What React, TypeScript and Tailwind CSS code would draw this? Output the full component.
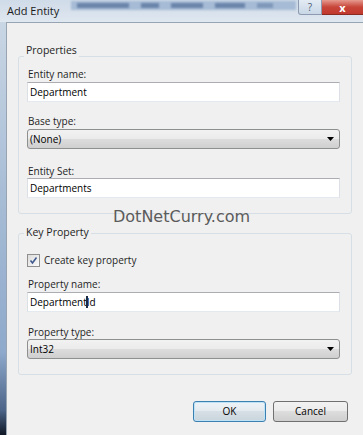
import React from "react";

const ui = { fontFamily: '"Open Sans", "Noto Sans", sans-serif' };

function Label({ children }: { children: React.ReactNode }) {
  return <div className="pl-[1px] text-[10px] leading-[14px] text-[#1e1e1e]">{children}</div>;
}

function TextBox({ children }: { children: React.ReactNode }) {
  return (
    <div className="flex h-[20px] items-center border border-[#abadb3] border-x-[#dbdfe6] border-b-[#e3e9ef] bg-white pl-[2px] text-[10px] text-black">
      {children}
    </div>
  );
}

function Combo({ value }: { value: string }) {
  return (
    <div className="flex h-[20px] items-center justify-between rounded-[3px] border border-[#8e8f8f] bg-[linear-gradient(#f2f2f2,#ebebeb_50%,#dddddd_50%,#cfcfcf)] pl-[2px] pr-[5px] text-[10px] text-black">
      <span>{value}</span>
      <svg width="7" height="4" viewBox="0 0 7 4">
        <path d="M0 0h7L3.5 4z" fill="#000" />
      </svg>
    </div>
  );
}

function Group({ title, legendPad, children }: { title: string; legendPad: string; children: React.ReactNode }) {
  return (
    <fieldset className="rounded-[3px] border border-[#d5dfe5] pb-[15px] pl-[8px] pr-[11px]">
      <legend className={`-ml-[3px] px-[2px] text-[10.5px] leading-[14px] text-[#1e1e1e] ${legendPad}`}>{title}</legend>
      {children}
    </fieldset>
  );
}

export default function App() {
  return (
    <div className="relative flex h-[435px] w-[363px] flex-col overflow-hidden bg-[#dce5ef]" style={ui}>
      {/* Title bar */}
      <div className="flex h-[22px] shrink-0 items-start bg-[linear-gradient(#cfdbe8,#dfe7f0)]">
        <div className="shrink-0 whitespace-nowrap pl-[7px] pt-[3px] text-[11px] leading-[16px] text-[#1a1a1a]">Add Entity</div>
        <div className="ml-[12px] mt-[1px] flex h-[9px] w-[225px] shrink-0 items-center gap-[12px] bg-[#a6bbd5] px-[6px] blur-[1px]">
          <span className="h-[5px] w-[52px] bg-[#6a85ab]" />
          <span className="h-[5px] w-[18px] bg-[#6a85ab]" />
          <span className="h-[5px] w-[32px] bg-[#6a85ab]" />
          <span className="h-[5px] w-[30px] bg-[#6a85ab]" />
          <span className="h-[5px] w-[16px] bg-[#7f98ba]" />
        </div>
        <div className="ml-auto flex">
          <div className="flex h-[15px] w-[24px] items-center justify-center rounded-bl-[3px] border border-t-0 border-[#8c9bb0] bg-[linear-gradient(#e3ebf4,#c8d6e6)] text-[10px] leading-none text-[#4a5a70]">
            ?
          </div>
          <div className="flex h-[15px] w-[41px] items-center justify-center border-b border-[#8b2a22] bg-[linear-gradient(#e69a8e,#c8453a_50%,#c0392e)] text-[11px] font-bold leading-none text-white">
            x
          </div>
        </div>
      </div>

      {/* Body */}
      <div className="flex flex-1">
        <div className="w-[6px] shrink-0 bg-[linear-gradient(#c9d6e4,#a9bed6_40%,#8ea9cb_80%,#4b6488_94%,#0f1725)]" />
        <div className="flex-1 border-l border-t border-[#98a4b2] bg-[#f0f0f0] pl-[11px] pr-[11px] pt-[20px]">
          <Group title="Properties" legendPad="pb-[12px]">
            <div className="-mt-[2px]">
              <Label>Entity name:</Label>
            </div>
            <div className="mt-[1px]">
              <TextBox>Department</TextBox>
            </div>
            <div className="mt-[12px]">
              <Label>Base type:</Label>
            </div>
            <div className="mt-[1px]">
              <Combo value="(None)" />
            </div>
            <div className="mt-[15px]">
              <Label>Entity Set:</Label>
            </div>
            <TextBox>Departments</TextBox>
          </Group>

          <div className="mt-[11px]">
            <Group title="Key Property" legendPad="pb-[2px]">
              <div className="mt-[12px] flex items-center gap-[4px]">
                <div className="flex h-[13px] w-[13px] items-center justify-center border border-[#8f8f8f] bg-[linear-gradient(135deg,#dcdcdc,#fbfbfb)]">
                  <svg width="9" height="9" viewBox="0 0 9 9">
                    <path d="M1.5 4.5 3.5 7 7.5 1.5" stroke="#3f5a8f" strokeWidth="1.6" fill="none" />
                  </svg>
                </div>
                <span className="text-[10px] leading-[14px] text-[#1e1e1e]">Create key property</span>
              </div>
              <div className="mt-[10px]">
                <Label>Property name:</Label>
              </div>
              <div className="mt-[1px]">
                <TextBox>
                  Department
                  <span className="relative">
                    <span className="absolute -left-[1px] top-[1px] h-[12px] w-[2px] bg-[#1c2a44]" />
                    Id
                  </span>
                </TextBox>
              </div>
              <div className="mt-[13px]">
                <Label>Property type:</Label>
              </div>
              <Combo value="Int32" />
            </Group>
          </div>

          <div className="mt-[26px] flex justify-end gap-[7px] pr-[4px]">
            <button className="flex h-[21px] w-[73px] items-center justify-center rounded-[3px] border border-[#3c7fb1] bg-[linear-gradient(#eef3f6,#e3eaef_50%,#d6dfe5_50%,#c9d4dc)] text-[10px] text-black shadow-[inset_0_0_0_1px_#bfe3f6]">
              OK
            </button>
            <button className="flex h-[21px] w-[75px] items-center justify-center rounded-[3px] border border-[#707070] bg-[linear-gradient(#f2f2f2,#ebebeb_50%,#dddddd_50%,#cfcfcf)] text-[10px] text-black">
              Cancel
            </button>
          </div>
        </div>
      </div>

      {/* watermark */}
      <div
        className="pointer-events-none absolute left-[113px] top-[207px] text-[16px] leading-[20px] text-[#5b5b5b]"
        style={{ fontFamily: '"DejaVu Sans", Verdana, sans-serif' }}
      >
        DotNetCurry.com
      </div>
    </div>
  );
}
